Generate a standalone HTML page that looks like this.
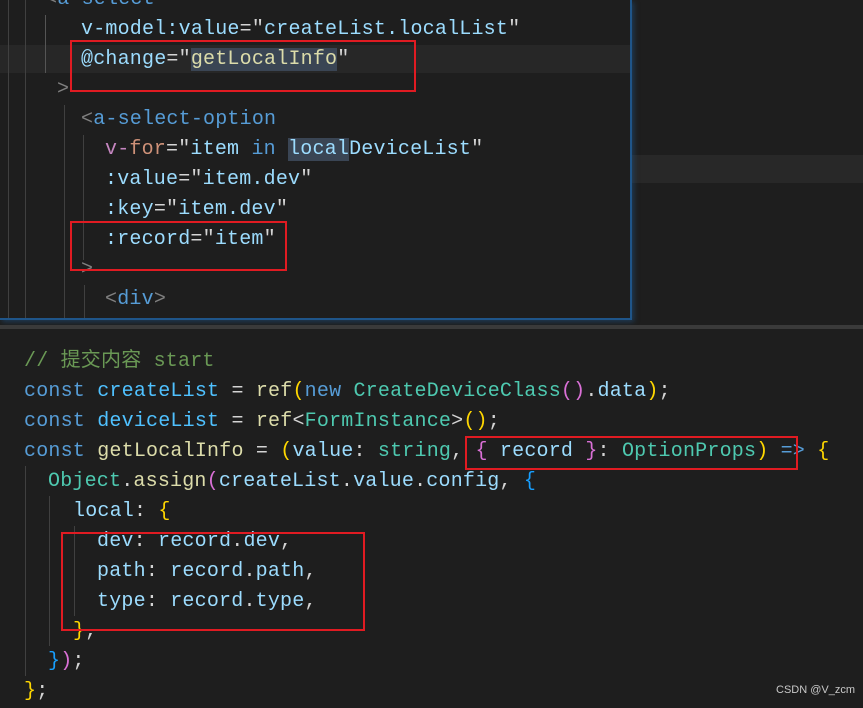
<!DOCTYPE html>
<html><head><meta charset="utf-8"><style>
body{margin:0;width:863px;height:708px;background:#1e1e1e;overflow:hidden;position:relative;font-family:"Liberation Mono","Noto Sans CJK SC",monospace;font-size:20px;}
.l{position:absolute;white-space:pre;line-height:30px;height:30px;letter-spacing:0.2px;color:#d4d4d4}
.g{position:absolute;width:1px;background:#404040}
.box{position:absolute;border:2px solid #e01b22;box-sizing:border-box;z-index:5}
.k{color:#569cd6}.v{color:#9cdcfe}.c{color:#4fc1ff}.f{color:#dcdcaa}.t{color:#4ec9b0}.y{color:#ffd700}.p{color:#da70d6}.b{color:#179fff}.m{color:#6a9955}.gr{color:#808080}.pk{color:#c586c0}.s{color:#ce9178}
.hl{background:#3a4554}
</style></head><body>
<div style="position:absolute;left:632px;top:155px;width:231px;height:28px;background:#282828"></div>
<div style="position:absolute;left:0;top:0;width:630px;height:318px;background:#1e1e1e;border-right:2px solid #1f5589;border-bottom:2px solid #1f5589;box-shadow:2px 2px 5px rgba(31,85,137,.5)"></div>
<div style="position:absolute;left:0;top:45px;width:630px;height:28px;background:#272727"></div>
<div style="position:absolute;left:0;top:325px;width:863px;height:4px;background:#3a3a3a"></div>
<div class="g" style="left:8px;top:0;height:318px"></div>
<div class="g" style="left:25px;top:0;height:318px"></div>
<div class="g" style="left:45px;top:15px;height:58px;background:#555"></div>
<div class="g" style="left:64px;top:105px;height:213px"></div>
<div class="g" style="left:83px;top:135px;height:125px"></div>
<div class="g" style="left:84px;top:285px;height:33px"></div>

<div class="l" style="left:45px;top:-15px"><span class="gr">&lt;</span><span class="k">a-select</span></div>
<div class="l" style="left:81px;top:15px"><span class="v">v-model:value</span>="<span class="v">createList.localList</span>"</div>
<div class="l" style="left:81px;top:45px"><span class="v">@change</span>="<span class="f hl">getLocalInfo</span>"</div>
<div class="l gr" style="left:57px;top:75px">&gt;</div>
<div class="l" style="left:81px;top:105px"><span class="gr">&lt;</span><span class="k">a-select-option</span></div>
<div class="l" style="left:105px;top:135px"><span class="pk">v-</span><span class="s">for</span>="<span class="v">item</span> <span class="k">in</span> <span class="v"><span class="hl">local</span>DeviceList</span>"</div>
<div class="l" style="left:105px;top:165px"><span class="v">:value</span>="<span class="v">item.dev</span>"</div>
<div class="l" style="left:105px;top:195px"><span class="v">:key</span>="<span class="v">item.dev</span>"</div>
<div class="l" style="left:105px;top:225px"><span class="v">:record</span>="<span class="v">item</span>"</div>
<div class="l gr" style="left:81px;top:255px">&gt;</div>
<div class="l" style="left:105px;top:285px"><span class="gr">&lt;</span><span class="k">div</span><span class="gr">&gt;</span></div>

<div class="g" style="left:25px;top:466px;height:210px"></div>
<div class="g" style="left:49px;top:496px;height:150px"></div>
<div class="g" style="left:74px;top:526px;height:90px"></div>

<div class="l m" style="left:24px;top:347px">// 提交内容 start</div>
<div class="l" style="left:24px;top:377px"><span class="k">const</span> <span class="c">createList</span> = <span class="f">ref</span><span class="y">(</span><span class="k">new</span> <span class="t">CreateDeviceClass</span><span class="p">()</span>.<span class="v">data</span><span class="y">)</span>;</div>
<div class="l" style="left:24px;top:407px"><span class="k">const</span> <span class="c">deviceList</span> = <span class="f">ref</span>&lt;<span class="t">FormInstance</span>&gt;<span class="y">()</span>;</div>
<div class="l" style="left:24px;top:437px"><span class="k">const</span> <span class="f">getLocalInfo</span> = <span class="y">(</span><span class="v">value</span>: <span class="t">string</span>, <span class="p">{</span> <span class="v">record</span> <span class="p">}</span>: <span class="t">OptionProps</span><span class="y">)</span> <span class="k">=&gt;</span> <span class="y">{</span></div>
<div class="l" style="left:48px;top:467px"><span class="t">Object</span>.<span class="f">assign</span><span class="p">(</span><span class="v">createList</span>.<span class="v">value</span>.<span class="v">config</span>, <span class="b">{</span></div>
<div class="l" style="left:73px;top:497px"><span class="v">local</span>: <span class="y">{</span></div>
<div class="l" style="left:97px;top:527px"><span class="v">dev</span>: <span class="v">record</span>.<span class="v">dev</span>,</div>
<div class="l" style="left:97px;top:557px"><span class="v">path</span>: <span class="v">record</span>.<span class="v">path</span>,</div>
<div class="l" style="left:97px;top:587px"><span class="v">type</span>: <span class="v">record</span>.<span class="v">type</span>,</div>
<div class="l" style="left:73px;top:617px"><span class="y">}</span>,</div>
<div class="l" style="left:48px;top:647px"><span class="b">}</span><span class="p">)</span>;</div>
<div class="l" style="left:24px;top:677px"><span class="y">}</span>;</div>

<div class="box" style="left:70px;top:40px;width:346px;height:52px"></div>
<div class="box" style="left:70px;top:221px;width:217px;height:50px"></div>
<div class="box" style="left:465px;top:436px;width:333px;height:34px"></div>
<div class="box" style="left:61px;top:532px;width:304px;height:99px"></div>

<div style="position:absolute;left:776px;top:684px;font-family:'Liberation Sans',sans-serif;font-size:11px;color:#c8c8c8">CSDN @V_zcm</div>
</body></html>
